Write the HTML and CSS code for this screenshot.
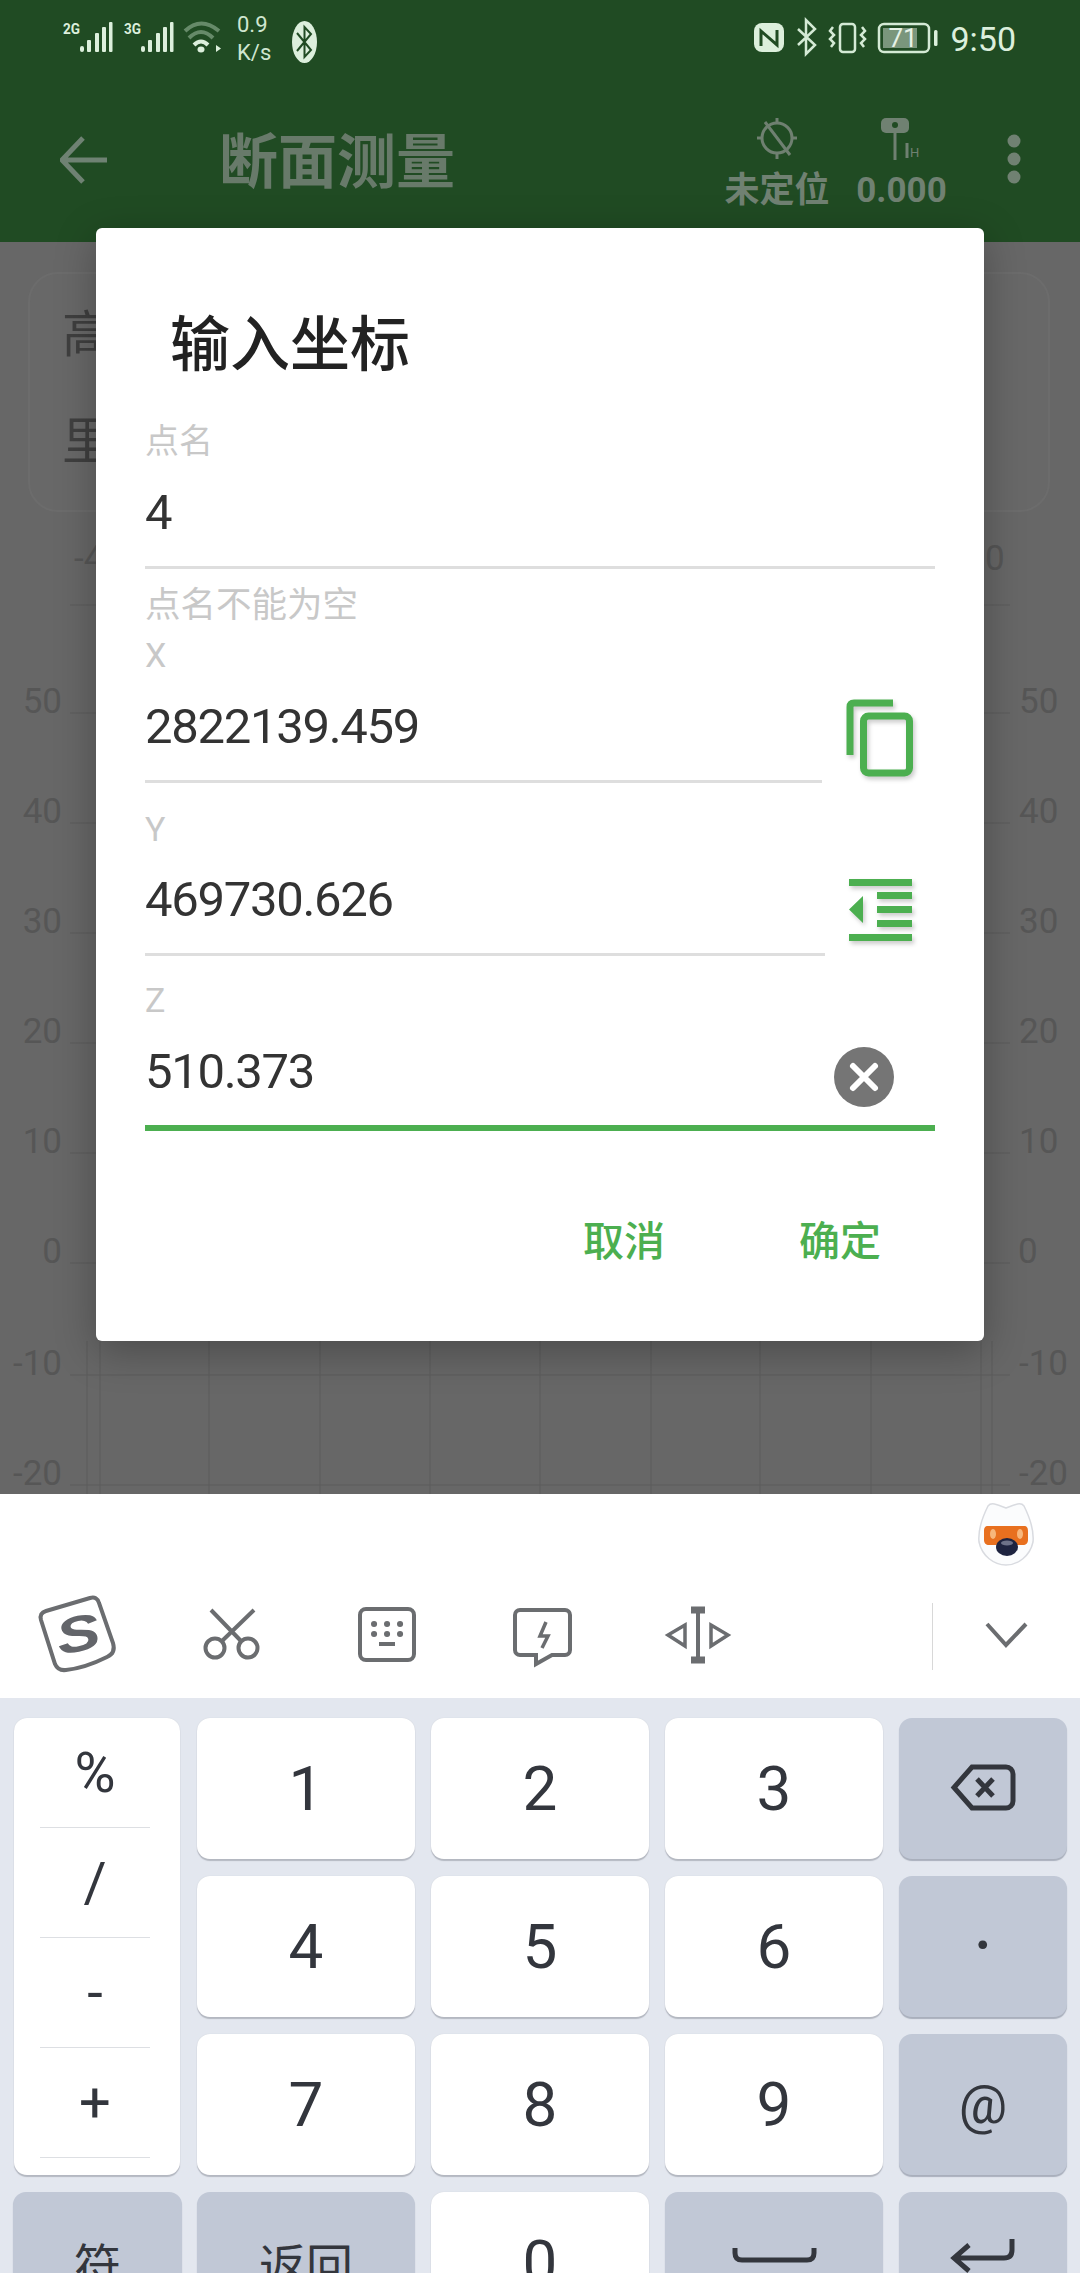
FILE: index.html
```html
<!DOCTYPE html>
<html lang="zh">
<head>
<meta charset="utf-8">
<title>断面测量</title>
<link rel="stylesheet" href="styles.css">
</head>
<body>
<div class="app">
  <header class="appbar">
    <div class="status">
      <div class="status-group">
        <svg class="sb sig" viewBox="63 11 50 52">
          <text class="net" x="63" y="34" textLength="17" lengthAdjust="spacingAndGlyphs">2G</text>
          <rect class="lt" x="80" y="46" width="4" height="6" rx="2"/><rect class="lt" x="87" y="40" width="4" height="12" rx="1"/><rect class="lt" x="95" y="33" width="4" height="19" rx="1"/><rect class="lt" x="102" y="27" width="4" height="25" rx="1"/><rect class="lt" x="109" y="22" width="3.500" height="30" rx="1"/>
        </svg>
        <svg class="sb sig sig3" viewBox="124 11 50 52">
          <text class="net" x="124" y="34" textLength="17" lengthAdjust="spacingAndGlyphs">3G</text>
          <rect class="lt" x="141" y="46" width="4" height="6" rx="2"/><rect class="lt" x="148" y="40" width="4" height="12" rx="1"/><rect class="lt" x="156" y="33" width="4" height="19" rx="1"/><rect class="lt" x="163" y="27" width="4" height="25" rx="1"/><rect class="lt" x="170" y="22" width="3.500" height="30" rx="1"/>
        </svg>
        <svg class="sb wifi" viewBox="183 11 41 52">
          <path class="wifi-dim" d="M185 31Q201 16 219 31"/><path class="wifi-dim" d="M189 38Q201 26 213 38"/><path class="wifi-on" d="M194 45Q201 38 208 45"/>
          <ellipse class="lt" cx="201" cy="49.500" rx="3.500" ry="3"/><path class="lt" d="M216 45l5 3.500-5 3.500z"/>
        </svg>
        <div class="speed"><div>0.9</div><div>K/s</div></div>
        <svg class="sb bt" viewBox="292 11 26 52">
          <ellipse class="lt" cx="304.500" cy="42" rx="12.500" ry="21"/>
          <path class="bt-mark" d="M297 33L311 50L304.500 57V27L311 34L297 51"/>
        </svg>
      </div>
      <div class="status-group">
        <svg class="sb right-icons" viewBox="757 11 184 52">
          <rect class="lt" x="757" y="23" width="30" height="29" rx="8"/>
          <path class="nfc" d="M764 46V31L780 45V30"/>
          <path class="thin" d="M801 29L818 45L809 54V20L818 29L801 45"/>
          <rect class="thin" x="843" y="24" width="15" height="28" rx="3"/>
          <path class="thin2" d="M836 27l-3 4 4 4-4 4 4 4-3 4M865 27l3 4-4 4 4 4-4 4 3 4"/>
          <rect class="batt" x="882" y="24" width="50" height="28" rx="5"/>
          <rect class="batt-fill" x="886" y="28" width="34" height="20"/>
          <text class="batt-num" x="906" y="47" text-anchor="middle">71</text>
          <rect class="lt" x="937" y="30" width="3.500" height="16" rx="1.500"/>
        </svg>
        <span class="clock">9:50</span>
      </div>
    </div>
    <div class="toolbar">
      <svg class="back" viewBox="60 76 48 166"><path class="back-path" d="M107 160H64M83 138L62 160L83 182"/></svg>
      <h1 class="title">断面测量</h1>
      <div class="gps gps-a">
        <svg class="gps-icon" viewBox="750 112 54 56">
          <circle class="dim-line" cx="777" cy="138" r="15"/>
          <path class="dim-line" d="M777 118v6M777 152v7M757 138h6M791 138h6M765 122l25 33"/>
        </svg>
        <span class="gps-label">未定位</span>
      </div>
      <div class="gps gps-b">
        <svg class="gps-icon" viewBox="875 112 54 56">
          <rect class="dim-fill" x="881" y="118" width="28" height="15" rx="5"/>
          <circle class="hole" cx="895" cy="125" r="3"/>
          <path class="dim-line" d="M895 133V160M907 143V158"/>
          <text class="ant-h" x="910" y="157">H</text>
        </svg>
        <span class="gps-label">0.000</span>
      </div>
      <svg class="dots" viewBox="1005 76 18 166"><ellipse class="dim-fill" cx="1014" cy="141" rx="6.500" ry="6.500"/><ellipse class="dim-fill" cx="1014" cy="159" rx="6.500" ry="6.500"/><ellipse class="dim-fill" cx="1014" cy="177" rx="6.500" ry="6.500"/></svg>
    </div>
  </header>

  <main class="stage">
    <section class="card">
      <div class="card-row">高</div>
      <div class="card-row">里</div>
    </section>
    <svg class="chart" viewBox="0 512 1080 982">
      <g class="grid">
        <path d="M87 1341V1494M100 1341V1494M209 1341V1494M320 1341V1494M430 1341V1494M540 1341V1494M651 1341V1494M760 1341V1494M871 1341V1494M981 1341V1494M992 1341V1494"/>
        <path d="M70 605H1010M70 713H1010M70 823H1010M70 933H1010M70 1043H1010M70 1153H1010M70 1263H1010M70 1375H1010M70 1485H1010"/>
      </g>
      <g class="axis">
        <text x="74" y="570">-40</text>
        <text x="985" y="570">0</text>
      </g>
      <g class="axis axis-l">
        <text x="62" y="713">50</text><text x="62" y="823">40</text><text x="62" y="933">30</text><text x="62" y="1043">20</text><text x="62" y="1153">10</text><text x="62" y="1263">0</text><text x="62" y="1375">-10</text><text x="62" y="1485">-20</text>
      </g>
      <g class="axis">
        <text x="1019" y="713">50</text><text x="1019" y="823">40</text><text x="1019" y="933">30</text><text x="1019" y="1043">20</text><text x="1019" y="1153">10</text><text x="1018" y="1263">0</text><text x="1019" y="1375">-10</text><text x="1019" y="1485">-20</text>
      </g>
    </svg>
  </main>

  <section class="kbd">
    <div class="cand-top">
      <svg class="mascot" viewBox="975 1494 62 80">
        <path class="m-head" d="M1006 1508C996 1504 991 1502 988 1506C981 1520 978 1532 979 1542C982 1556 994 1565 1006 1565C1018 1565 1030 1556 1033 1542C1034 1532 1031 1520 1024 1506C1021 1502 1016 1504 1006 1508Z"/>
        <path class="m-band" d="M988 1526H1024C1027 1526 1028 1528 1028 1531V1540C1028 1543 1026 1545 1023 1545H1016L1006 1540L996 1545H989C986 1545 984 1543 984 1540V1531C984 1528 985 1526 988 1526Z"/>
        <ellipse class="m-eye" cx="993" cy="1534" rx="3" ry="5"/><ellipse class="m-eye" cx="1020" cy="1534" rx="3" ry="5"/>
        <ellipse class="m-nose" cx="1007" cy="1547" rx="11" ry="9"/>
        <ellipse class="m-shine" cx="1007" cy="1543" rx="6" ry="2.500"/>
      </svg>
    </div>
    <div class="tools">
      <svg class="tool t-logo" viewBox="35 1574 85 124">
        <path class="tool-line" d="M46 1611L90 1598Q97 1596 99 1603L113 1643Q116 1653 107 1657Q85 1668 66 1670Q58 1671 55 1664L41 1620Q39 1613 46 1611Z"/>
        <text class="logo-s" x="78" y="1651" text-anchor="middle" textLength="44" lengthAdjust="spacingAndGlyphs" transform="rotate(-12 78 1634)">S</text>
      </svg>
      <svg class="tool t-scissors" viewBox="200 1574 64 124">
        <circle class="tool-line" cx="215" cy="1648" r="9.500"/><circle class="tool-line" cx="248" cy="1648" r="9.500"/>
        <path class="tool-line" d="M211 1610L241 1641M254 1610L222 1641"/>
      </svg>
      <svg class="tool t-keys" viewBox="354 1574 65 124">
        <rect class="tool-line" x="360" y="1609" width="54" height="51" rx="6"/>
        <path class="tool-dots" d="M374 1624h.1M387 1624h.1M400 1624h.1M374 1634h.1M387 1634h.1M400 1634h.1"/>
        <path class="tool-line" d="M379 1644H395"/>
      </svg>
      <svg class="tool t-bubble" viewBox="510 1574 66 124">
        <path class="tool-line" d="M520 1610H565A5 5 0 0 1 570 1615V1650A5 5 0 0 1 565 1655H552L536 1664V1655H520A5 5 0 0 1 515 1650V1615A5 5 0 0 1 520 1610Z"/>
        <path class="tool-thin" d="M546 1622L540 1636H548L542 1648"/>
      </svg>
      <svg class="tool t-cursor" viewBox="662 1574 72 124">
        <path class="tool-line" d="M698 1610V1660"/>
        <path class="tool-bar" d="M691 1610H705M691 1660H705"/>
        <path class="tool-thin" d="M685 1625L668 1635L685 1646ZM711 1625L728 1635L711 1646Z"/>
      </svg>
      <span class="tool-sep"></span>
      <svg class="tool t-chev" viewBox="982 1574 49 124"><path class="tool-line" d="M987 1624L1006 1645L1026 1624"/></svg>
    </div>
    <div class="keys">
      <div class="sym">
        <div class="sym-item">%</div>
        <div class="sym-item">/</div>
        <div class="sym-item">-</div>
        <div class="sym-item">+</div>
      </div>
      <div class="key">1</div>
      <div class="key">2</div>
      <div class="key">3</div>
      <div class="key fn">
        <svg class="key-svg" viewBox="899 1718 168 141">
          <path class="key-stroke" d="M972 1767H1006A7 7 0 0 1 1013 1774V1801A7 7 0 0 1 1006 1808H972L954 1787.500Z"/>
          <path class="key-stroke" d="M977 1779L993 1796M993 1779L977 1796"/>
        </svg>
      </div>
      <div class="key">4</div>
      <div class="key">5</div>
      <div class="key">6</div>
      <div class="key fn dot">·</div>
      <div class="key">7</div>
      <div class="key">8</div>
      <div class="key">9</div>
      <div class="key fn at">@</div>
      <div class="key fn cjk wide-l">符</div>
      <div class="key fn cjk">返回</div>
      <div class="key">0</div>
      <div class="key fn">
        <svg class="key-svg" viewBox="665 2192 218 141"><path class="key-stroke" d="M735 2248V2253Q735 2260 742 2260H807Q814 2260 814 2253V2248"/></svg>
      </div>
      <div class="key fn">
        <svg class="key-svg" viewBox="899 2192 168 141"><path class="key-stroke" d="M1012 2239V2250Q1012 2258 1004 2258H956M969 2245L954 2258L969 2271"/></svg>
      </div>
    </div>
  </section>

  <div class="dialog">
    <h2 class="dlg-title">输入坐标</h2>
    <div class="field f-name">
      <div class="f-label">点名</div>
      <div class="f-value">4</div>
    </div>
    <div class="helper">点名不能为空</div>
    <div class="row r-x">
      <div class="field f-x">
        <div class="f-label">X</div>
        <div class="f-value">2822139.459</div>
      </div>
      <svg class="side-icon copy" viewBox="843 696 76 87">
        <path class="ic-line" d="M893 703H854Q850 703 850 707V755"/>
        <rect class="ic-line" x="863.500" y="716" width="46" height="57" rx="5"/>
      </svg>
    </div>
    <div class="row r-y">
      <div class="field f-y">
        <div class="f-label">Y</div>
        <div class="f-value">469730.626</div>
      </div>
      <svg class="side-icon indent" viewBox="843 876 76 81">
        <path class="ic-fill" d="M849 880H912V887H849ZM877 893H912V900H877ZM877 907H912V914H877ZM877 921H912V928H877ZM849 935H912V942H849ZM863 897V924L849 910.500Z"/>
      </svg>
    </div>
    <div class="field f-z">
      <div class="f-label">Z</div>
      <div class="f-value">510.373</div>
      <svg class="clear" viewBox="0 0 60 60"><circle class="clear-bg" cx="30" cy="30" r="30"/><path class="clear-x" d="M19 19L41 41M41 19L19 41"/></svg>
    </div>
    <div class="actions">
      <span class="act">取消</span>
      <span class="act">确定</span>
    </div>
  </div>
</div>
</body>
</html>
```
FILE: styles.css
```css
* { box-sizing: border-box; }
html, body { margin: 0; padding: 0; }
body { width: 1080px; height: 2273px; overflow: hidden; font-family: Roboto, "Noto Sans CJK SC", sans-serif; }
svg { display: block; flex: none; }
text { font-family: Roboto, "Noto Sans CJK SC", sans-serif; }

.app { position: relative; width: 1080px; height: 2273px; display: flex; flex-direction: column; overflow: hidden; }

/* app bar */
.appbar { height: 242px; background: #204b23; flex: none; }
.status { height: 76px; padding: 11px 64px 0 63px; display: flex; justify-content: space-between; align-items: flex-start; }
.status-group { display: flex; align-items: flex-start; }
.sb { height: 52px; }
.sig { width: 50px; }
.sig3 { margin-left: 11px; }
.wifi { width: 41px; margin-left: 9px; }
.speed { margin-left: 13px; width: 55px; font-size: 22px; line-height: 28px; color: #cfe6d0; }
.bt { width: 26px; }
.right-icons { width: 184px; }
.clock { margin-left: 12px; font-size: 34px; line-height: 57px; color: #dcefdc; }
.net { font-size: 14px; font-weight: 700; fill: #dcefdc; }
.lt { fill: #dcefdc; }
.wifi-dim { fill: none; stroke: #668a69; stroke-width: 4; }
.wifi-on { fill: none; stroke: #dcefdc; stroke-width: 4; }
.bt-mark { fill: none; stroke: #204b23; stroke-width: 2; }
.nfc { fill: none; stroke: #204b23; stroke-width: 3; }
.thin { fill: none; stroke: #d4ead5; stroke-width: 2.500; }
.thin2 { fill: none; stroke: #d4ead5; stroke-width: 2.500; }
.batt { fill: none; stroke: #d4ead5; stroke-width: 2.500; }
.batt-fill { fill: #7a967c; }
.batt-num { font-size: 26px; fill: #e6f2e6; }

.toolbar { height: 166px; display: flex; align-items: flex-start; }
.back { width: 48px; height: 166px; margin-left: 60px; }
.back-path { fill: none; stroke: #6f8273; stroke-width: 5; }
.title { margin: 55px 0 0 111px; font-size: 59px; line-height: 64px; font-weight: 700; color: #687a6a; white-space: nowrap; }
.gps { display: flex; flex-direction: column; align-items: center; padding-top: 36px; }
.gps-a { margin-left: 269px; width: 106px; }
.gps-b { margin-left: 26px; width: 91px; }
.gps-icon { width: 54px; height: 56px; }
.gps-label { font-size: 35px; line-height: 46px; font-weight: 700; color: #708172; white-space: nowrap; }
.dim-line { fill: none; stroke: #6f8071; stroke-width: 3; }
.dim-fill { fill: #708172; }
.hole { fill: #204b23; }
.ant-h { font-size: 13px; fill: #708172; }
.dots { width: 18px; height: 166px; margin-left: 58px; }

/* background page under the scrim */
.stage { height: 1252px; flex: none; background: #676767; padding-top: 30px; }
.card { height: 240px; margin: 0 30px 0 28px; border: 2px solid #6c6c6c; border-radius: 30px; background: #686868; padding: 31px 0 0 32px; }
.card-row { font-size: 50px; line-height: 60px; height: 107px; color: #3f3f3f; }
.chart { width: 1080px; height: 982px; }
.grid path { fill: none; stroke: #5c5c5c; stroke-width: 1; }
.axis text { font-size: 35px; fill: #565656; }
.axis-l text { text-anchor: end; }

/* dialog */
.dialog { position: absolute; left: 96px; top: 228px; width: 888px; height: 1113px; background: #fff; border-radius: 6px; padding: 88px 49px 0; box-shadow: 0 10px 40px rgba(0, 0, 0, .28); }
.dlg-title { margin: 0 0 0 25px; font-size: 60px; line-height: 60px; font-weight: 500; color: #222; }
.f-label { font-size: 34px; line-height: 40px; color: #c8c8c8; }
.f-value { margin-top: 22px; font-size: 49px; line-height: 60px; letter-spacing: -1.300px; color: #333; padding-bottom: 23px; border-bottom: 3px solid #dedede; }
.f-name { margin-top: 45px; }
.helper { margin-top: 16px; font-size: 35.500px; line-height: 40px; color: #c8c8c8; }
.row { display: flex; align-items: flex-end; }
.r-x { margin-top: 10px; }
.r-y { margin-top: 26px; }
.f-x { width: 677px; }
.f-y { width: 680px; }
.f-y .f-value { margin-top: 21px; }
.side-icon { filter: drop-shadow(2px 3px 2px rgba(0, 0, 0, .2)); }
.copy { width: 76px; height: 87px; margin-left: 21px; }
.indent { width: 76px; height: 81px; margin-left: 18px; }
.ic-line { fill: none; stroke: #4caf50; stroke-width: 7; }
.ic-fill { fill: #4caf50; }
.f-z { position: relative; margin-top: 24px; }
.f-z .f-value { border-bottom: 6px solid #4caf50; }
.clear { position: absolute; width: 60px; height: 60px; right: 41px; bottom: 24px; }
.clear-bg { fill: #757575; }
.clear-x { stroke: #fff; stroke-width: 6; fill: none; stroke-linecap: round; }
.actions { margin-top: 81px; padding-right: 54px; display: flex; justify-content: flex-end; gap: 134px; }
.act { font-size: 41px; line-height: 60px; font-weight: 500; color: #4caf50; }

/* keyboard */
.kbd { flex: 1; min-height: 0; overflow: hidden; display: flex; flex-direction: column; background: #e3e7ef; }
.cand-top { height: 80px; flex: none; background: #fff; display: flex; justify-content: flex-end; padding-right: 43px; }
.mascot { width: 62px; height: 80px; }
.m-head { fill: #fbfcfd; stroke: #d9dbe0; stroke-width: 1.500; }
.m-band { fill: #e8701f; }
.m-eye { fill: #f7b77c; }
.m-nose { fill: #1e2440; }
.m-shine { fill: #6d7289; }
.tools { height: 124px; flex: none; background: #fff; display: flex; }
.tool { height: 124px; }
.t-logo { width: 85px; margin-left: 35px; }
.t-scissors { width: 64px; margin-left: 80px; }
.t-keys { width: 65px; margin-left: 90px; }
.t-bubble { width: 66px; margin-left: 91px; }
.t-cursor { width: 72px; margin-left: 86px; }
.tool-sep { width: 1px; height: 67px; margin: 29px 0 0 198px; background: #d8d8d8; flex: none; }
.t-chev { width: 49px; margin-left: 49px; }
.tool-line { fill: none; stroke: #6b6d70; stroke-width: 4; }
.tool-thin { fill: none; stroke: #6b6d70; stroke-width: 3.500; }
.tool-bar { fill: none; stroke: #6b6d70; stroke-width: 7; }
.tool-dots { fill: none; stroke: #6b6d70; stroke-width: 6; stroke-linecap: round; }
.logo-s { font-family: "Liberation Sans", sans-serif; font-size: 50px; font-weight: 700; font-style: italic; fill: #63656a; }

.keys { flex: none; display: grid; grid-template-columns: 167px 218px 218px 218px 168px; grid-auto-rows: 141px; column-gap: 16px; row-gap: 17px; padding: 20px 0 0 14px; }
.key { display: flex; align-items: center; justify-content: center; background: #fff; border-radius: 13px; font-size: 62px; color: #33363d; box-shadow: 0 2px 1px #b4b8c1, 0 0 1px #c4c8d0; }
.fn { background: #c1c8d6; box-shadow: 0 2px 1px #a9afbc; }
.at { font-size: 54px; }
.dot { font-size: 78px; }
.cjk { font-size: 47px; }
.wide-l { margin-left: -1px; margin-right: -1px; }
.key-svg { width: 100%; height: 100%; }
.key-stroke { fill: none; stroke: #33363d; stroke-width: 5; }
.sym { grid-row: span 3; margin-right: 1px; background: #fff; border-radius: 13px; box-shadow: 0 2px 1px #b4b8c1, 0 0 1px #c4c8d0; padding: 0 30px 0 26px; color: #33363d; }
.sym-item { height: 110px; display: flex; align-items: center; justify-content: center; font-size: 56px; border-bottom: 1px solid #dddfe3; }
```
